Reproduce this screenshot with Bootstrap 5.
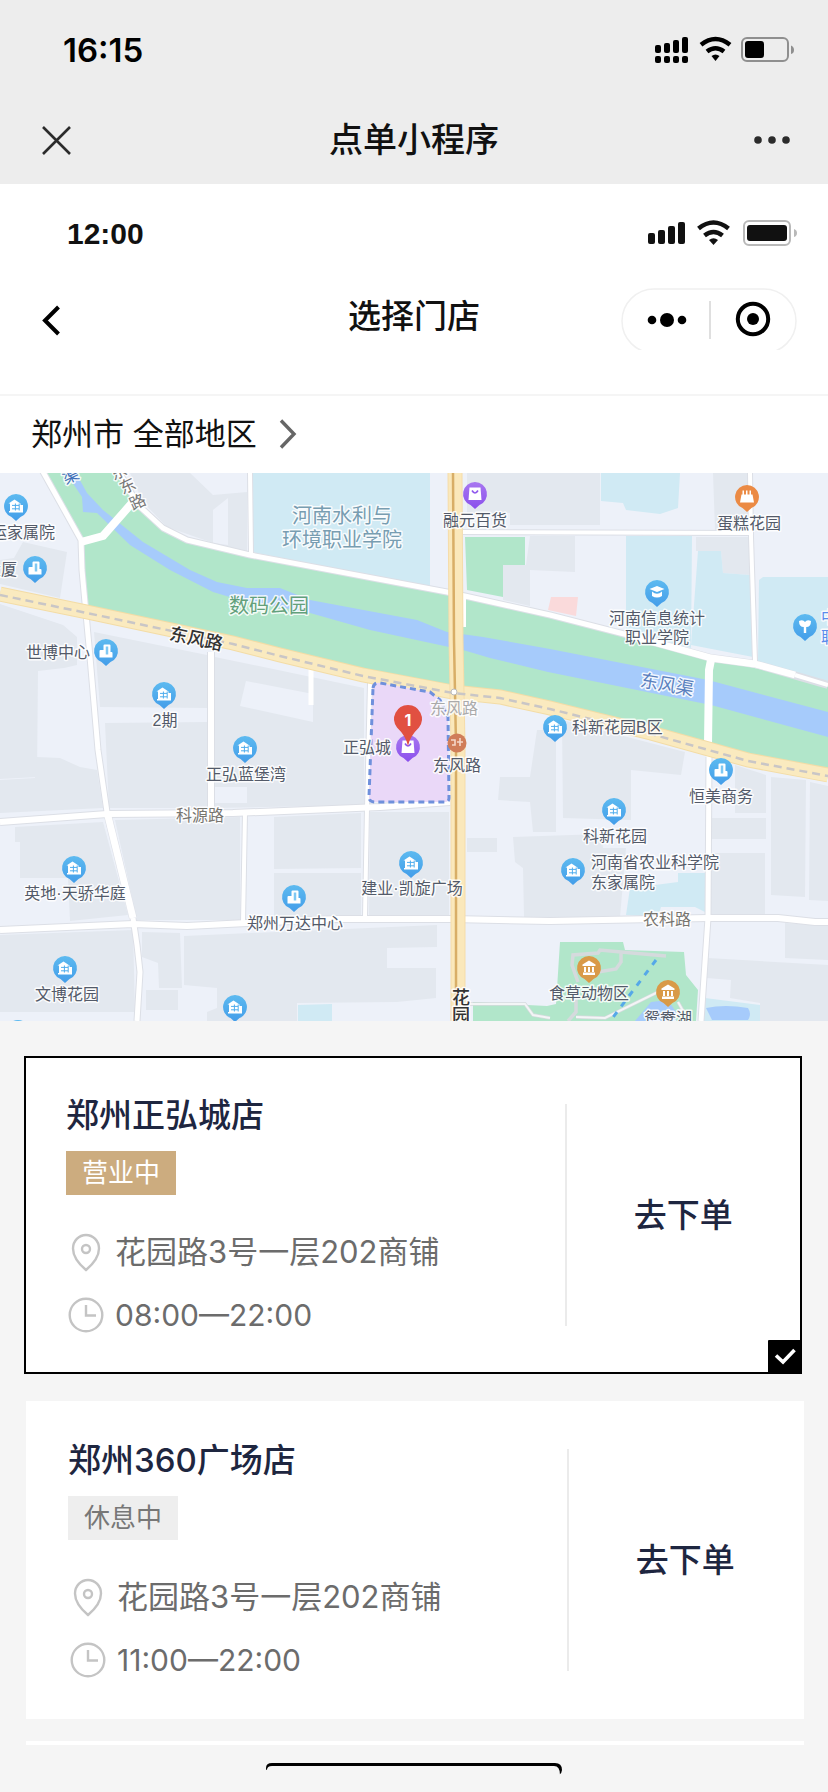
<!DOCTYPE html>
<html lang="zh-CN">
<head>
<meta charset="utf-8">
<meta name="viewport" content="width=device-width, initial-scale=1">
<title>选择门店</title>
<link href="https://cdn.jsdelivr.net/npm/bootstrap@5.3.0/dist/css/bootstrap.min.css" rel="stylesheet">
<style>
  body { background: #f5f5f5; color: #111; font-family: "Inter", "Noto Sans CJK SC", sans-serif; font-size: 30px; line-height: 40px; }
  svg { display: block; flex: none; }
  .shell-header { background: #ededed; padding-bottom: 4px; }
  .shell-status { height: 100px; padding: 0 34px 0 63px; }
  .shell-nav { height: 80px; padding: 0 37px; }
  .clock-shell { font-size: 33px; font-weight: 600; color: #000; }
  .shell-title { font-size: 34px; font-weight: 500; }
  .plain-btn { border: 0; background: none; padding: 0; color: inherit; display: block; }
  .app-header { background: #fff; padding: 20px 0 42px; border-bottom: 2px solid #f5f5f5; }
  .app-status { height: 60px; padding: 0 31px 0 67px; }
  .clock-app { font-family: "Liberation Sans", sans-serif; font-size: 30px; font-weight: 700; }
  .app-nav { height: 64px; margin-top: 24px; padding: 0 31px; }
  .app-title { font-size: 33px; line-height: 56px; font-weight: 500; }
  .region-bar { height: 77px; padding: 0 31px 2px; background: #fff; }
  .region-btn { font-size: 31px; gap: 22px; }
  .map-view svg { width: 100%; height: auto; }
  .map-view text { font-family: "Liberation Sans", "Noto Sans CJK SC", sans-serif; font-size: 16px; fill: #535a69; stroke: #fff; stroke-opacity: .85; stroke-width: 3px; stroke-linejoin: round; paint-order: stroke; }
  .map-view .mid { text-anchor: middle; }
  .map-view .area { font-size: 20px; }
  .map-view .avenue { font-size: 18px; }
  .block { fill: #e3e8ef; }
  .campus { fill: #d0eaf4; }
  .park { fill: #b1e6ca; }
  .water { fill: #a6cbfb; }
  .street { fill: none; stroke: #fff; stroke-linejoin: round; }
  .curb { fill: none; stroke: #dcdfe6; stroke-linejoin: round; }
  .store-list { padding: 35px 24px 0; }
  .store { background: #fff; border: 2px solid #fff; margin-left: 2px; margin-bottom: 27px; }
  .store.selected { border-color: #000; margin-left: 0; margin-right: 2px; }
  .store-info { padding: 37px 0 37px 40px; }
  .store-name { font-size: 33px; line-height: 40px; font-weight: 500; color: #1e2640; margin: 0 0 16px; }
  .state { display: inline-block; font-size: 26px; line-height: 44px; padding: 0 16px; vertical-align: top; background: #eee; color: #777; }
  .state.open { background: #ccac7f; color: #fff; }
  .fact { color: #6c6c6c; gap: 11px; margin-top: 23px; }
  .address { font-size: 31px; margin-top: 37px; }
  .order-wrap { flex: 0 0 30.4%; padding: 46px 0; }
  .order-btn { width: 100%; height: 100%; border-left: 2px solid #ebebeb; font-size: 33px; font-weight: 500; color: #1e2640; }
  .tick { right: -2px; bottom: -2px; }
  .store-peek { height: 4px; background: #fff; margin: -5px 0 0 2px; }
  .home-bar { padding: 18px 0 17px; }
</style>
</head>
<body>
<header class="shell-header">
  <div class="shell-status d-flex align-items-center justify-content-between">
    <span class="clock-shell">16:15</span>
    <svg width="139" height="28" viewBox="0 0 139 28" aria-hidden="true">
      <g><rect y="9" width="6" height="8" rx="2"/><rect x="9" y="7" width="6" height="10" rx="2"/><rect x="18" y="4" width="6" height="13" rx="2"/><rect x="27" y="1" width="6" height="16" rx="2"/>
      <rect y="20" width="6" height="7" rx="2"/><rect x="9" y="20" width="6" height="7" rx="2"/><rect x="18" y="20" width="6" height="7" rx="2"/><rect x="27" y="20" width="6" height="7" rx="2"/></g>
      <g fill="none" stroke="#000" stroke-width="4.500"><path d="M46 8.800q14.500-11.500 29 0"/><path d="M52 15.500q8.500-6.500 17 0"/></g><path d="M56.500 20q4-3 8 0l-4 5z"/>
      <rect x="87" y="2" width="46" height="23" rx="5" fill="none" stroke="#8f8f8f" stroke-width="2"/><rect x="90" y="5" width="19" height="17" rx="3"/><path d="M136 9.500q3 1 3 4.500t-3 4z" fill="#8f8f8f"/>
    </svg>
  </div>
  <nav class="shell-nav d-flex align-items-center">
    <div class="flex-fill w-25"><button class="plain-btn" aria-label="关闭"><svg width="34" height="29" viewBox="0 0 34 29"><path d="M6 1l27 27M33 1L6 28" stroke="#2b2b2b" stroke-width="2.600"/></svg></button></div>
    <div class="shell-title">点单小程序</div>
    <div class="flex-fill w-25 d-flex justify-content-end"><button class="plain-btn" aria-label="更多"><svg width="37" height="10" viewBox="0 0 37 10" fill="#2b2b2b"><circle cx="4" cy="5" r="3.800"/><circle cx="18" cy="5" r="3.800"/><circle cx="32" cy="5" r="3.800"/></svg></button></div>
  </nav>
</header>

<header class="app-header">
  <div class="app-status d-flex align-items-center justify-content-between">
    <span class="clock-app">12:00</span>
    <svg width="149" height="28" viewBox="0 0 149 28" fill="#111" aria-hidden="true">
      <rect y="13" width="7" height="11" rx="2"/><rect x="10" y="10" width="7" height="14" rx="2"/><rect x="20" y="6" width="7" height="18" rx="2"/><rect x="30" y="2" width="7" height="22" rx="2"/>
      <g fill="none" stroke="#111" stroke-width="4.500"><path d="M50.500 8.500q15-12 30 0"/><path d="M56.500 15.500q9-7 18 0"/></g><path d="M61 20q4.500-3.500 9 0l-4.500 5z"/>
      <rect x="96" y="1" width="46" height="24" rx="5" fill="none" stroke="#b9b9b9" stroke-width="2"/><rect x="99" y="5" width="40" height="16" rx="3"/><path d="M146 9q3 1 3 4t-3 4z" fill="#b9b9b9"/>
    </svg>
  </div>
  <nav class="app-nav d-flex align-items-start">
    <div class="flex-fill w-25"><button class="plain-btn" aria-label="返回"><svg width="30" height="64" viewBox="0 0 30 64"><path d="M27.500 19L14 32.500L27.500 46" fill="none" stroke="#000" stroke-width="4"/></svg></button></div>
    <h1 class="app-title mb-0">选择门店</h1>
    <div class="flex-fill w-25 d-flex justify-content-end">
      <svg width="176" height="62" viewBox="0 0 176 62" role="img" aria-label="更多与关闭">
        <rect x="1" y="1" width="174" height="64" rx="32" fill="#fff" stroke="#f0f0f0" stroke-width="1.500"/>
        <circle cx="31" cy="32" r="4.300"/><circle cx="46" cy="32" r="7"/><circle cx="61" cy="32" r="4.300"/>
        <path d="M89 13v38" stroke="#d4d4d4" stroke-width="1.500"/>
        <circle cx="132" cy="31" r="15.200" fill="none" stroke="#000" stroke-width="4"/><circle cx="132" cy="31" r="6"/>
      </svg>
    </div>
  </nav>
</header>

<main>
  <div class="region-bar d-flex align-items-center">
    <button class="plain-btn region-btn d-flex align-items-center"><span>郑州市 全部地区</span>
      <svg width="18" height="32" viewBox="0 0 18 32"><path d="M2 2.500L15 16L2 29.500" fill="none" stroke="#666" stroke-width="3.400"/></svg></button>
  </div>

  <section class="map-view" aria-label="门店地图">
    <svg viewBox="0 473 828 548" role="img" aria-label="门店附近地图">
      <defs>
        <linearGradient id="blueFill" x2="0" y2="1"><stop stop-color="#5dbaf0"/><stop offset="1" stop-color="#439de9"/></linearGradient>
        <linearGradient id="purpleFill" x2="0" y2="1"><stop stop-color="#a877f0"/><stop offset="1" stop-color="#8a50ec"/></linearGradient>
        <path id="drop" d="M0-12a12 12 0 0 1 4.500 23.100L0 15l-4.500-3.900A12 12 0 0 1 0-12z"/>
        <g id="house"><use href="#drop" fill="url(#blueFill)"/><path fill="#fff" d="M-7.500-2.500L-1.500-6.500L4.500-2.500V-1H7v7.500H-7V5h1v-7.500z"/><path d="M-4-.6h7M-4 2.800h7M-.6-2.500v7M3.200-2.500v7" stroke="#4faded" stroke-width="1"/></g>
        <g id="office"><use href="#drop" fill="url(#blueFill)"/><path fill="#fff" d="M-2.500-5.500q0-1 1-1h5q1 0 1 1V1h1q1 0 1 1v4.500h-13V0q0-1 1-1h3z"/><path d="M1-4.500v8" stroke="#7fc8f3" stroke-width="2.500"/></g>
        <g id="bag"><use href="#drop" fill="url(#purpleFill)"/><path fill="#fff" d="M-5.500-6.500h11L6.500 6h-13z"/><path d="M-3-3.500q3 5 6 0" fill="none" stroke="#9058ed" stroke-width="1.600"/></g>
        <g id="museum"><use href="#drop" fill="#d99a48"/><path fill="#fff" d="M0-7.500L6.500-3.500v1.500h-13v-1.500zM-5-1h2v5h-2zM-1-1h2v5h-2zM3-1h2v5h-2zM-6 4.500H6V7H-6z"/></g>
      </defs>
      <rect y="473" width="828" height="548" fill="#edf1f9"/>

      <g class="block">
        <path d="M0 604L63 625L77 637V665L64 668L38 671L37 777L0 779z"/>
        <path d="M23 542L67 552L60 598L0 584V560L14 558z"/>
        <path d="M94 632L207 655V708L100 707z"/><path d="M105 723L207 722V808H109z"/>
        <path d="M215 657L364 688V805L215 808z"/>
        <path d="M37 757L60 758L80 767L97 770L103 808L0 813V780L35 778z"/>
        <path d="M15 827L103 822L128 915L70 921L68 878H20V842H15z"/><path d="M115 820L240 817V920H137z"/>
        <path d="M0 935L133 930L135 1012H0z"/><path d="M142 932L180 933L182 988H159L158 963L142 957z"/>
        <path d="M184 936L437 925V947L387 948V968H436V998L397 1002L297 1003V1021H207V1012L217 1008V988L184 985z"/>
        <path d="M146 990h32v20h-32z"/><path d="M274 817L361 813V868L274 869z"/><path d="M274 873h87v42l-87 3z"/><path d="M370 812h79v103h-80z"/>
        <path d="M130 473H190L213 495L247 492V552L213 543L167 527L143 502z"/>
        <path d="M467 473H600V525H510V513H467z"/><path d="M530 536H575V572L530 570V606L503 600V565H526z"/>
        <path d="M713 473H748V530H715z"/><path d="M696 537H750V575L723 573L721 551H696z"/>
        <path d="M537 730H556V832H533L530 802L498 800L500 777L530 777z"/><path d="M467 838h30v14h-30z"/>
        <path d="M513 837L601 834L603 848H626L620 917H524L523 868L515 862z"/>
        <path d="M562 720L685 752L681 775L631 770V820L563 818z"/><path d="M735 765L766 775V813H735z"/>
        <path d="M711 818h55v21h-55z"/><path d="M711 853h54v64h-54z"/><path d="M771 777L806 780L805 897L771 895z"/><path d="M810 782L828 786V901L809 900z"/>
        <path d="M785 923L828 926V960L785 958z"/><path d="M708 958L828 965V1021H760V1003L730 998L731 980L707 978z"/>
      </g>
      <g fill="#edf1f9"><path d="M228 498L213 510V543L228 545z"/><path d="M246 681L313 694V722L240 706z"/><path d="M215 787H247V803H215z"/></g>

      <g class="campus">
        <path d="M252 473H430V587L252 552z"/><path d="M601 473H680L678 508L660 514L626 510L623 503L601 501z"/>
        <path d="M626 536H692L691 648L626 630z"/><path d="M698 551H721L723 573L750 575L753 657L691 645z"/>
        <path d="M759 580L763 577H828V684L758 662z"/><path d="M630 888L655 885L678 882V873H705V912L695 907H661L658 917L626 915z"/>
        <path d="M298 1005L332 1004V1021H298z"/><path d="M705 998L760 1005V1021H700z"/>
      </g>
      <path d="M551 597H578L576 616L548 610z" fill="#fadadb"/>

      <path class="park" d="M47 473H120L138 505L163 528L187 540L250 555L447 592L550 615L628 635L711 658L828 685V773L715 745L650 728L550 705L483 690H450L270 650L86 609L83 570L82 541z"/>
      <path class="park" d="M465 537H525V565H503V597L467 590z"/>
      <path class="park" d="M560 942H623L625 950L684 952L686 975L698 990L696 1021H473V1002L547 1006L556 1004z"/>
      <path class="water" d="M66 473H76L87 493L103 510L143 542L190 570L217 582L247 588H280L310 600L417 620L447 632L483 637L550 649L708 680L828 712V737L711 705L548 672L490 658L463 650L370 630L310 613L233 598L213 592L170 570L130 545L97 513L83 512L82 497z"/>
      <path class="water" d="M635 1021L651 1002L668 1000L676 1012V1021z"/><path class="water" d="M706 1008Q725 1004 748 1008Q752 1014 748 1020H712z"/>

      <g stroke="#d5dadd" stroke-width="3.500" fill="none"><path d="M470 1004H525L533 1015L550 1018"/><path d="M578 982L572 965L573 955L598 953L600 950L621 952L666 956M621 952V962L616 969L598 972"/><path d="M576 985V1012L568 1021M576 1017L605 1018L658 992M678 1002L682 1009L674 1017"/></g>
      <g stroke="#f3f5f6" stroke-width="2" fill="none"><path d="M470 1004H525L533 1015L550 1018M576 1017L605 1018L658 992M678 1002L682 1009L674 1017"/></g>
      <path d="M656 960L611 1020" stroke="#55a8e8" stroke-width="3" stroke-dasharray="6 7"/>

      <g class="curb">
        <path stroke-width="7" d="M42 470L81 540L82 570L90 657L98 750L107 812M133 918L137 945L140 972L137 1021M118 470L138 505L163 528L187 540L250 555L447 592L550 615L628 635"/>
        <path stroke-width="8" d="M107 812L133 918M0 822L107 814L233 813L380 807L450 802M0 930L133 924L187 926L247 923L337 919L452 919L550 921L708 918H778L815 922H828M628 635L711 658L755 664L828 685M211 652V812"/>
        <path stroke-width="7" d="M709 757L708 918L701 1021"/>
        <path stroke-width="6" d="M250 473L251 553M463 532L753 533M750 473L751 537L755 662M245 813L243 922M370 683L367 808L365 917"/>
      </g>
      <g class="street">
        <path stroke-width="5" d="M42 470L81 540L82 570L90 657L98 750L107 812"/>
        <path stroke-width="7" d="M107 812L133 918"/><path stroke-width="5" d="M133 918L137 945L140 972L137 1021"/>
        <path stroke-width="8" d="M81 542L103 536L132 503"/>
        <path stroke-width="6" d="M0 822L107 814L233 813L380 807L450 802M0 930L133 924L187 926L247 923L337 919L452 919L550 921L708 918H778L815 922H828"/>
        <path stroke-width="5" d="M118 470L138 505L163 528L187 540L250 555L447 592L550 615L628 635"/>
        <path stroke-width="7" d="M628 635L711 658L755 664L795 675"/><path stroke-width="4" d="M795 675L828 685"/>
        <path stroke-width="6" d="M211 652V812"/><path stroke-width="8" d="M711 660L709 670L708 744"/><path stroke-width="5" d="M311 665V705M709 755L708 918L701 1021"/>
        <path stroke-width="4" d="M250 473L251 553M463 532L753 533M750 473L751 537L755 662M245 813L243 922M370 683L367 808L365 917M464 595V627"/>
      </g>

      <path d="M0 594L87 612L233 643L280 655L363 675L453 692L500 697L550 708L651 733L748 760L828 775" fill="none" stroke="#f3dca6" stroke-width="15"/>
      <path d="M0 594L87 612L233 643L280 655L363 675L453 692L500 697L550 708L651 733L748 760L828 775" fill="none" stroke="#faeabf" stroke-width="13"/>
      <path d="M455 473L456 640L458 745V1021" fill="none" stroke="#f5dcaa" stroke-width="15"/>
      <path d="M455 473L456 640L458 745V1021" fill="none" stroke="#fae8bb" stroke-width="13"/>
      <path d="M453 473L454 640L456 745V1021" fill="none" stroke="#d8ae67" stroke-width="2.500"/>
      <path d="M0 595L87 613L233 644L280 656L363 676L453 693L500 698L550 709L651 734L748 761L828 776" fill="none" stroke="#c9c6c6" stroke-width="2.500" stroke-dasharray="8 5"/>
      <circle cx="454" cy="692" r="3" fill="#fff" stroke="#bbb"/>
      <path d="M373 688Q374 682 380 683L430 692L440 700L448 717L449 798Q449 802 445 802H375Q369 802 369 797z" fill="#ead8f8" stroke="#6f90dc" stroke-width="3" stroke-dasharray="6 4"/>

      <use href="#house" x="16" y="506"/><text x="55" y="538" text-anchor="end">运家属院</text>
      <use href="#office" x="35" y="568"/><text x="17" y="575" text-anchor="end">大厦</text>
      <use href="#office" x="106" y="651"/><text class="mid" x="58" y="658">世博中心</text>
      <use href="#house" x="164" y="694"/><text class="mid" x="165" y="726">2期</text>
      <use href="#house" x="245" y="748"/><text class="mid" x="246" y="780">正弘蓝堡湾</text>
      <text class="mid" x="200" y="821" style="fill:#77756f">科源路</text>
      <use href="#house" x="74" y="868"/><text class="mid" x="75" y="899">英地·天骄华庭</text>
      <use href="#house" x="65" y="968"/><text class="mid" x="67" y="1000">文博花园</text>
      <use href="#house" x="235" y="1007"/><use href="#house" x="18" y="1032"/>
      <use href="#office" x="294" y="897"/><text class="mid" x="295" y="929">郑州万达中心</text>
      <use href="#house" x="411" y="863"/><text class="mid" x="412" y="894">建业·凯旋广场</text>
      <use href="#bag" x="475" y="494"/><text class="mid" x="475" y="526">融元百货</text>
      <text class="mid area" x="342" y="523" style="fill:#789db1">河南水利与</text><text class="mid area" x="342" y="547" style="fill:#789db1">环境职业学院</text>
      <text class="mid area" x="269" y="613" style="fill:#62a07b">数码公园</text>
      <text class="mid avenue" transform="translate(195 645) rotate(12)" style="fill:#333;font-weight:500">东风路</text>
      <text class="mid" transform="translate(121 477) rotate(-25)" style="fill:#777">东</text><text class="mid" transform="translate(130 491) rotate(-25)" style="fill:#777">东</text><text class="mid" transform="translate(140 507) rotate(-25)" style="fill:#777">路</text>
      <text class="mid" transform="translate(73 481) rotate(-25)" style="fill:#4170b8">渠</text>
      <text class="mid avenue" transform="translate(666 691) rotate(10)" style="fill:#5a80bd">东风渠</text>
      <text class="mid" x="454" y="714" style="fill:#aaa">东风路</text>
      <text class="mid" x="367" y="753">正弘城</text><use href="#bag" x="408" y="747"/>
      <path d="M408 705a14 14 0 0 1 11 22.500Q410 736 408 746Q406 736 397 727.500A14 14 0 0 1 408 705z" fill="#e15041"/>
      <text class="mid" x="408" y="726" style="font-family:Inter,sans-serif;fill:#fff;stroke:none;font-weight:700">1</text>
      <circle cx="457" cy="743" r="9.500" fill="#d07d59"/><path d="M451 740h4v5h-3M460 738v8M457 742h6" stroke="#f5d8c8" stroke-width="1.600" fill="none"/><text class="mid" x="457" y="771">东风路</text>
      <g transform="translate(747 497)"><use href="#drop" fill="#eb8a44"/><path fill="#fff" d="M-4.500-6.500h1.500v4h2v-4h1.500v4h2v-4H4v4h1.500L7 5.500H-7L-5.500-2.500h1z"/></g><text class="mid" x="749" y="529">蛋糕花园</text>
      <g transform="translate(657 592)"><use href="#drop" fill="url(#blueFill)"/><path fill="#fff" d="M-7.500-3L0-6L7.500-3L0 0zM-5-.5Q0 4 5-.5V4Q0 7-5 4z"/></g><text class="mid" x="657" y="624">河南信息统计</text><text class="mid" x="657" y="643">职业学院</text>
      <g transform="translate(805 626)"><use href="#drop" fill="url(#blueFill)"/><path fill="#fff" d="M-6-5Q-2-7 0-4Q2-7 6-5Q6 1 1.200 1V7h-2.400V1Q-6 1-6-5z"/></g><text x="821" y="623" style="fill:#5b8cec">中</text><text x="821" y="643" style="fill:#5b8cec">职</text>
      <use href="#house" x="555" y="727"/><text x="572" y="733">科新花园B区</text>
      <use href="#office" x="721" y="770"/><text class="mid" x="721" y="802">恒美商务</text>
      <use href="#house" x="614" y="810"/><text class="mid" x="615" y="842">科新花园</text>
      <use href="#house" x="573" y="870"/><text x="591" y="868">河南省农业科学院</text><text x="591" y="888">东家属院</text>
      <text class="mid" x="667" y="925" style="fill:#77756f">农科路</text>
      <use href="#museum" x="589" y="968"/><text class="mid" x="589" y="999">食草动物区</text>
      <use href="#museum" x="668" y="992"/><text class="mid" x="668" y="1024">鸳鸯湖</text>
      <text class="mid avenue" x="461" y="1004" style="fill:#333;font-weight:500">花</text><text class="mid avenue" x="461" y="1022" style="fill:#333;font-weight:500">园</text>
    </svg>
  </section>

  <section class="store-list">
    <article class="store selected d-flex position-relative">
      <div class="store-info flex-fill">
        <h2 class="store-name">郑州正弘城店</h2>
        <span class="state open">营业中</span>
        <div class="fact address d-flex align-items-center"><svg width="38" height="40" viewBox="0 0 38 40" fill="none" stroke="#c4c4c4" stroke-width="2.400"><path d="M20 38Q33 27 33 16.500A13 13.500 0 0 0 7 16.500Q7 27 20 38z"/><circle cx="20" cy="17" r="4"/></svg><span>花园路3号一层202商铺</span></div>
        <div class="fact d-flex align-items-center"><svg width="38" height="40" viewBox="0 0 38 40" fill="none" stroke="#c4c4c4" stroke-width="2.400"><circle cx="20" cy="20" r="16.300"/><path d="M20 10v10.500h10"/></svg><span>08:00—22:00</span></div>
      </div>
      <div class="order-wrap"><button class="plain-btn order-btn">去下单</button></div>
      <svg class="tick position-absolute" width="34" height="34" viewBox="0 0 34 34" role="img" aria-label="已选择"><rect width="34" height="34" rx="1"/><path d="M8 15.500L15 22L26.500 10" fill="none" stroke="#fff" stroke-width="3.600"/></svg>
    </article>
    <article class="store d-flex position-relative">
      <div class="store-info flex-fill">
        <h2 class="store-name">郑州360广场店</h2>
        <span class="state">休息中</span>
        <div class="fact address d-flex align-items-center"><svg width="38" height="40" viewBox="0 0 38 40" fill="none" stroke="#c4c4c4" stroke-width="2.400"><path d="M20 38Q33 27 33 16.500A13 13.500 0 0 0 7 16.500Q7 27 20 38z"/><circle cx="20" cy="17" r="4"/></svg><span>花园路3号一层202商铺</span></div>
        <div class="fact d-flex align-items-center"><svg width="38" height="40" viewBox="0 0 38 40" fill="none" stroke="#c4c4c4" stroke-width="2.400"><circle cx="20" cy="20" r="16.300"/><path d="M20 10v10.500h10"/></svg><span>11:00—22:00</span></div>
      </div>
      <div class="order-wrap"><button class="plain-btn order-btn">去下单</button></div>
    </article>
    <div class="store-peek"></div>
  </section>
</main>

<footer class="home-bar d-flex justify-content-center">
  <svg width="296" height="12" viewBox="0 0 296 12" aria-hidden="true"><path d="M0 7V5Q0 0 6 0H289Q296 0 296 7Q296 10 293 12L288 4H6z"/><path d="M1 12V7Q1 3 6 3H288Q294 3 294 12z" fill="#f5f5f5"/></svg>
</footer>
<script src="https://cdn.jsdelivr.net/npm/bootstrap@5.3.0/dist/js/bootstrap.bundle.min.js"></script>
</body>
</html>
